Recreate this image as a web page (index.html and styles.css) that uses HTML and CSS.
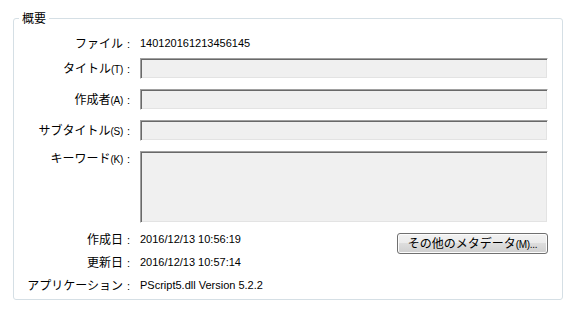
FILE: index.html
```html
<!DOCTYPE html>
<html lang="ja">
<head>
<meta charset="utf-8">
<link rel="stylesheet" href="styles.css">
</head>
<body>
<fieldset class="group">
  <legend class="group-title">概要</legend>
  <div class="form">
    <div class="label">ファイル<span class="colon">:</span></div>
    <div class="value span">140120161213456145</div>

    <div class="label">タイトル<span class="mn">(T)</span><span class="colon">:</span></div>
    <div class="field"></div>

    <div class="label">作成者<span class="mn">(A)</span><span class="colon">:</span></div>
    <div class="field"></div>

    <div class="label">サブタイトル<span class="mn">(S)</span><span class="colon">:</span></div>
    <div class="field"></div>

    <div class="label label-top">キーワード<span class="mn">(K)</span><span class="colon">:</span></div>
    <div class="field field-tall"></div>

    <div class="label">作成日<span class="colon">:</span></div>
    <div class="value">2016/12/13 10:56:19</div>
    <button class="btn" type="button">その他のメタデータ<span class="mn">(M)...</span></button>

    <div class="label">更新日<span class="colon">:</span></div>
    <div class="value">2016/12/13 10:57:14</div>

    <div class="label">アプリケーション<span class="colon">:</span></div>
    <div class="value">PScript5.dll Version 5.2.2</div>
  </div>
</fieldset>
</body>
</html>
```

FILE: styles.css
```css
html, body {
  margin: 0;
  padding: 0;
  background: #ffffff;
}

body {
  font-family: "Noto Sans CJK JP", "Liberation Sans", sans-serif;
  font-size: 12px;
  color: #000;
}

.group {
  box-sizing: border-box;
  width: 550px;
  margin: 10px 0 0 13px;
  padding: 7px 14px 1px 0;
  border: 1px solid #d5dfe5;
  border-radius: 3px;
  min-inline-size: 0;
}

.group-title {
  margin-left: 5px;
  padding: 0 3px;
  line-height: 16px;
  font-size: 12px;
}

.form {
  display: grid;
  grid-template-columns: 117px 1fr 151px;
  grid-template-rows: 25px 31px 31px 31px 78px 23px 23px 23px;
  column-gap: 9px;
  align-items: start;
}

.label {
  grid-column: 1;
  text-align: right;
  line-height: 20px;
  white-space: nowrap;
}

.label-top {
  line-height: 14px;
}

.colon {
  font-family: "Liberation Sans", sans-serif;
  font-size: 11px;
  margin-left: 4px;
  margin-right: 1px;
}

.mn {
  font-family: "Liberation Sans", sans-serif;
  font-size: 10px;
  letter-spacing: -0.3px;
}

.value {
  grid-column: 2;
  font-family: "Liberation Sans", "Noto Sans CJK JP", sans-serif;
  font-size: 11px;
  line-height: 20px;
  white-space: nowrap;
}

.value.span {
  grid-column: 2 / 4;
}

.field {
  grid-column: 2 / 4;
  box-sizing: border-box;
  height: 21px;
  background: #f0f0f0;
  border: 1px solid;
  border-color: #a0a0a0 #ffffff #ffffff #a0a0a0;
  box-shadow: inset 1px 1px 0 #696969, inset -1px -1px 0 #e3e3e3;
}

.field-tall {
  height: 72px;
}

.btn {
  grid-column: 3;
  grid-row: 6 / 8;
  justify-self: end;
  margin-top: 4px;
  box-sizing: border-box;
  width: 151px;
  height: 21px;
  padding: 0 0 1px;
  font-family: "Noto Sans CJK JP", "Liberation Sans", sans-serif;
  font-size: 12px;
  line-height: 18px;
  color: #000;
  border: 1px solid #707070;
  border-radius: 3px;
  background: linear-gradient(to bottom, #f2f2f2 0%, #ebebeb 50%, #dddddd 50%, #cfcfcf 100%);
  box-shadow: inset 0 0 0 1px #fcfcfc;
}
```
